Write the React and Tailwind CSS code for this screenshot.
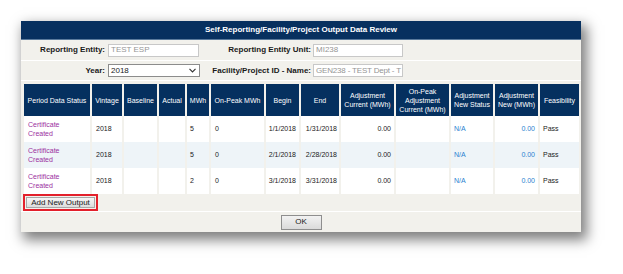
import React from 'react';

const colClass = [
  'w-[66px]', 'w-[30px]', 'w-[33px]', 'w-[26px]', 'w-[22px]', 'w-[53px]', 'w-[33px]',
  'w-[38px]', 'w-[53px]', 'w-[53px]', 'w-[42px]', 'w-[43px]', 'w-[39px]',
];

const headers = [
  'Period Data Status', 'Vintage', 'Baseline', 'Actual', 'MWh', 'On-Peak MWh', 'Begin', 'End',
  'Adjustment Current (MWh)', 'On-Peak Adjustment Current (MWh)', 'Adjustment New Status',
  'Adjustment New (MWh)', 'Feasibility',
];

const rows = [
  { mwh: '5', begin: '1/1/2018', end: '1/31/2018', bg: 'bg-white' },
  { mwh: '5', begin: '2/1/2018', end: '2/28/2018', bg: 'bg-[#eef4f8]' },
  { mwh: '2', begin: '3/1/2018', end: '3/31/2018', bg: 'bg-white' },
];

export default function App() {
  return (
    <div className="w-[623px] h-[274px] bg-white pl-[21px] pt-[21px] font-['Liberation_Sans',Arial,sans-serif] text-[#1a1a1a]">
      <div className="w-[560px] h-[211px] bg-[#f2f1ec] shadow-[4px_6px_12px_2px_rgba(0,0,0,0.5)] flex flex-col">
        <div className="h-[19px] bg-[#07305f] border-b border-[#5a7a9c] flex items-center justify-center text-white text-[8px] font-bold">
          Self-Reporting/Facility/Project Output Data Review
        </div>

        <div className="h-[21px] flex items-center border-b border-white">
          <div className="w-[84px] text-right text-[8px] font-bold">Reporting Entity:</div>
          <div className="ml-[3px] w-[91px] h-[13px] bg-white border border-[#c8c8c8] text-[8px] text-[#959595] flex items-center px-[2px]">TEST ESP</div>
          <div className="w-[112px] text-right text-[8px] font-bold">Reporting Entity Unit:</div>
          <div className="ml-[2px] w-[90px] h-[13px] bg-white border border-[#c8c8c8] text-[8px] text-[#959595] flex items-center px-[2px]">MI238</div>
        </div>

        <div className="h-[20px] flex items-center border-b border-white">
          <div className="w-[84px] text-right text-[8px] font-bold">Year:</div>
          <div className="ml-[3px] w-[92px] h-[13px] bg-white border border-[#8c8c8c] text-[8px] text-[#1a1a1a] flex items-center justify-between pl-[2px] pr-[3px]">
            <span>2018</span>
            <svg width="7" height="5" viewBox="0 0 7 5">
              <polyline points="0.5,0.8 3.5,4 6.5,0.8" fill="none" stroke="#333" strokeWidth="1.1" />
            </svg>
          </div>
          <div className="w-[111px] text-right text-[8px] font-bold">Facility/Project ID - Name:</div>
          <div className="ml-[2px] w-[90px] h-[13px] bg-white border border-[#c8c8c8] text-[8px] tracking-[-0.18px] text-[#959595] flex items-center pl-[2px] whitespace-nowrap">GEN238 - TEST Dept - T</div>
        </div>

        <div className="pt-[3px] pl-px">
          <table className="table-fixed w-[559px] border-separate border-spacing-x-[2px] border-spacing-y-0 text-[7px]">
            <colgroup>
              {colClass.map((c, i) => (
                <col key={i} className={c} />
              ))}
            </colgroup>
            <thead>
              <tr className="h-[32px]">
                {headers.map((h) => (
                  <th key={h} className="bg-[#05305f] text-white font-normal text-center align-middle leading-[9px] px-px">
                    {h}
                  </th>
                ))}
              </tr>
            </thead>
            <tbody>
              {rows.map((r, i) => (
                <tr key={i} className="h-[26px]">
                  <td className={`${r.bg} pl-[4px] text-[#9b2f9f] leading-[9px]`}>Certificate<br />Created</td>
                  <td className={`${r.bg} pl-[4px]`}>2018</td>
                  <td className={r.bg}></td>
                  <td className={r.bg}></td>
                  <td className={`${r.bg} pl-[3px]`}>{r.mwh}</td>
                  <td className={`${r.bg} pl-[4px]`}>0</td>
                  <td className={`${r.bg} text-right pr-[3px]`}>{r.begin}</td>
                  <td className={`${r.bg} text-right pr-[2px]`}>{r.end}</td>
                  <td className={`${r.bg} text-right pr-[3px]`}>0.00</td>
                  <td className={r.bg}></td>
                  <td className={`${r.bg} pl-[3px] text-[#2a7fd0]`}>N/A</td>
                  <td className={`${r.bg} text-right pr-[3px] text-[#2a7fd0]`}>0.00</td>
                  <td className={`${r.bg} pl-[3px]`}>Pass</td>
                </tr>
              ))}
            </tbody>
          </table>
        </div>

        <div className="h-[18px] flex items-start pl-[2px] border-b border-white">
          <div className="border-2 border-[#e3202b] p-px h-[17px] w-[75px]">
            <button className="w-full h-full border border-[#a8a8a8] bg-gradient-to-b from-[#f6f6f6] to-[#dcdcdc] text-[8px] text-[#1a1a1a] flex items-center justify-center">
              Add New Output
            </button>
          </div>
        </div>

        <div className="flex-1 flex items-center justify-center">
          <button className="w-[41px] h-[15px] border border-[#8e8e8e] bg-gradient-to-b from-[#f2f2f2] to-[#dadada] text-[8px] text-[#1a1a1a] flex items-center justify-center">
            OK
          </button>
        </div>
      </div>
    </div>
  );
}
